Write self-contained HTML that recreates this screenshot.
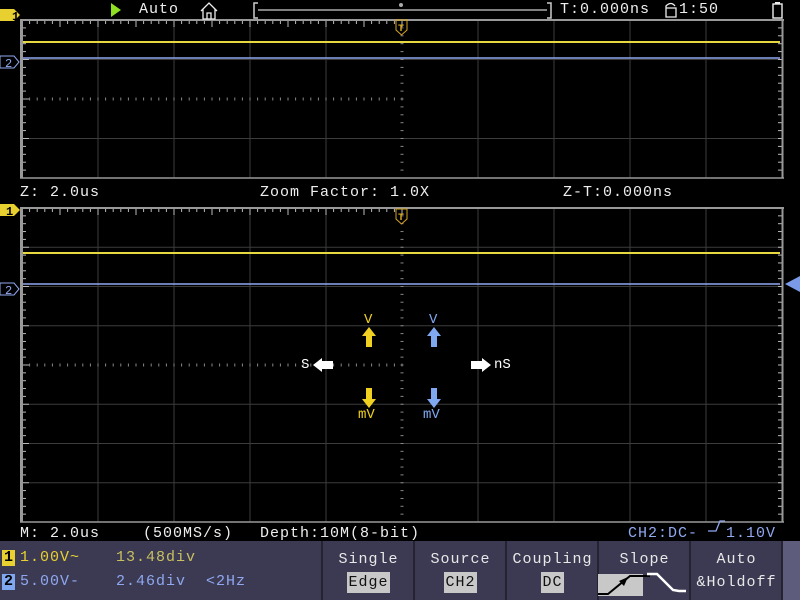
<!DOCTYPE html>
<html><head><meta charset="utf-8"><style>
body{margin:0;width:800px;height:600px;background:#000;overflow:hidden;position:relative;font-family:"Liberation Mono",monospace;}
.t{position:absolute;white-space:pre;font-size:15px;line-height:16px;letter-spacing:1px;}
svg{position:absolute;left:0;top:0}
.btn{position:absolute;top:542px;height:58px;text-align:center;color:#e8e8e8;font-size:15px;letter-spacing:1px;}
</style></head><body>
<svg id="s" width="800" height="600" viewBox="0 0 800 600">
<rect x="0" y="541" width="800" height="59" fill="#3b3a52"/>
<rect x="782" y="541" width="18" height="59" fill="#5d5c7c"/>
<g stroke="#24232f" stroke-width="2">
<line x1="322" y1="541" x2="322" y2="600"/><line x1="414" y1="541" x2="414" y2="600"/><line x1="506" y1="541" x2="506" y2="600"/><line x1="598" y1="541" x2="598" y2="600"/><line x1="690" y1="541" x2="690" y2="600"/><line x1="782" y1="541" x2="782" y2="600"/>
</g>
<g id="g"></g>
<line x1="23" y1="42" x2="780" y2="42" stroke="#e8d840" stroke-width="2"/>
<line x1="23" y1="58" x2="780" y2="58" stroke="#8fa8f0" stroke-width="1.5"/>
<line x1="23" y1="253" x2="780" y2="253" stroke="#e8d840" stroke-width="2"/>
<line x1="23" y1="284" x2="780" y2="284" stroke="#8fa8f0" stroke-width="1.5"/>
<polygon points="0,9 14,9 20,15 14,21 0,21" fill="#e8d030"/>
<text x="12" y="20" font-family="Liberation Mono" font-weight="bold" font-size="12" fill="#000">1</text>
<polygon points="0,204 14,204 20,210 14,216 0,216" fill="#e8d030"/>
<text x="6" y="215" font-family="Liberation Mono" font-weight="bold" font-size="12" fill="#000">1</text>
<polygon points="0,56 14,56 19,62 14,68 0,68" fill="none" stroke="#8fa8f0"/>
<text x="5" y="67" font-family="Liberation Mono" font-size="12" fill="#8fa8f0">2</text>
<polygon points="0,283 14,283 19,289 14,295 0,295" fill="none" stroke="#8fa8f0"/>
<text x="5" y="294" font-family="Liberation Mono" font-size="12" fill="#8fa8f0">2</text>
<polygon points="800,276 785,284 800,292" fill="#7a9ae8"/>
<path d="M396,20 h11 v10 l-5.5,5 l-5.5,-5z" fill="none" stroke="#d9a520"/>
<text x="398" y="31" font-family="Liberation Mono" font-weight="bold" font-size="10" fill="#d9a520">T</text>
<path d="M396,209 h11 v10 l-5.5,5 l-5.5,-5z" fill="none" stroke="#d9a520"/>
<text x="398" y="220" font-family="Liberation Mono" font-weight="bold" font-size="10" fill="#d9a520">T</text>
<polygon points="111,3 121,10 111,17" fill="#8ee020"/>
<path d="M201,11 L209,3 L217,11 M203,9.5 V19 H215 V9.5 M207,19 V13 H211 V19" fill="none" stroke="#eee" stroke-width="1.3"/>
<path d="M258,3 H254 V18 H258 M547,3 H551 V18 H547" fill="none" stroke="#ccc" stroke-width="1.5"/>
<line x1="258" y1="10" x2="547" y2="10" stroke="#aaa" stroke-width="1.5"/>
<circle cx="401" cy="5" r="2" fill="#aaa"/>
<path d="M666,17 V8 H676 V17 Z M666,8 V6 Q671,1 675,6" fill="none" stroke="#eee" stroke-width="1.3"/>
<rect x="773" y="4" width="9" height="14" fill="none" stroke="#eee" stroke-width="1.4"/><rect x="775" y="2" width="5" height="2" fill="#eee"/>
<g fill="#f0d020"><polygon points="369,327 362,336 366,336 366,347 372,347 372,336 376,336"/><polygon points="369,408 362,399 366,399 366,388 372,388 372,399 376,399"/></g>
<g fill="#80a8f0"><polygon points="434,327 427,336 431,336 431,347 437,347 437,336 441,336"/><polygon points="434,408 427,399 431,399 431,388 437,388 437,399 441,399"/></g>
<g fill="#fff"><polygon points="313,365 322,358 322,361 333,361 333,369 322,369 322,372"/><polygon points="491,365 482,358 482,361 471,361 471,369 482,369 482,372"/></g>
<rect x="598" y="574" width="45" height="22" fill="#c8c8c8"/>
<path d="M598,594 H608 L630,576 H650" fill="none" stroke="#000" stroke-width="2"/>
<polygon points="628,577 619,581 624,586" fill="#000"/>
<path d="M647,574 H657 L673,590 L679,591 H686" fill="none" stroke="#fff" stroke-width="2.5"/>
<path d="M708,531 H716 L720,521 H725" fill="none" stroke="#8fa8f0" stroke-width="1.3"/>
</svg>
<script>
var g=document.getElementById('g'),h='';
function L(x1,y1,x2,y2,c,w){h+='<line x1="'+x1+'" y1="'+y1+'" x2="'+x2+'" y2="'+y2+'" stroke="'+c+'" stroke-width="'+(w||1)+'"/>';}
function panel(t,b,nd){
 var dy=(b-t)/nd;
 for(var i=1;i<10;i++){var x=22+76*i;if(i!=5)L(x,t,x,b,'#3c3c3c');}
 for(var j=1;j<nd;j++){var y=t+dy*j;if(Math.abs(y-(t+b)/2)>1)L(22,y,782,y,'#3c3c3c');}
 var cy=(t+b)/2;
 for(var k=0;k<=50;k++){var x=22+7.6*k;L(x,t,x,t+(k%5?4:7),'#bbb');L(x,cy-1.5,x,cy+1.5,'#888');}
 for(var k=0;k<=nd*5;k++){var y=t+dy/5*k;L(22,y,(k%5?26:29),y,'#bbb');L(778,y,782,y,'#bbb');L(400.5,y,403.5,y,'#888');}
 L(21.5,t,21.5,b,'#999',3);L(20,t,784,t,'#999',2);L(782.5,t,782.5,b,'#999',2);L(20,b,784,b,'#999',1.5);
}
panel(20,178,4);panel(208,522,8);
g.innerHTML=h;
</script>
<div class="t" style="left:139px;top:2px;color:#eee">Auto</div>
<div class="t" style="left:560px;top:2px;color:#eee">T:0.000ns</div>
<div class="t" style="left:679px;top:2px;color:#eee">1:50</div>
<div class="t" style="left:20px;top:185px;color:#eee">Z: 2.0us</div>
<div class="t" style="left:260px;top:185px;color:#eee">Zoom Factor: 1.0X</div>
<div class="t" style="left:563px;top:185px;color:#eee">Z-T:0.000ns</div>
<div class="t" style="left:364px;top:312px;color:#f0d020;font-size:14px;letter-spacing:0">V</div>
<div class="t" style="left:429px;top:312px;color:#80a8f0;font-size:14px;letter-spacing:0">V</div>
<div class="t" style="left:358px;top:407px;color:#f0d020;font-size:14px;letter-spacing:0">mV</div>
<div class="t" style="left:423px;top:407px;color:#80a8f0;font-size:14px;letter-spacing:0">mV</div>
<div class="t" style="left:301px;top:357px;color:#fff;font-size:14px;letter-spacing:0">S</div>
<div class="t" style="left:494px;top:357px;color:#fff;font-size:14px;letter-spacing:0">nS</div>
<div class="t" style="left:20px;top:526px;color:#eee">M: 2.0us</div>
<div class="t" style="left:143px;top:526px;color:#eee">(500MS/s)</div>
<div class="t" style="left:260px;top:526px;color:#eee">Depth:10M(8-bit)</div>
<div class="t" style="left:628px;top:526px;color:#8fa8f0">CH2:DC-</div>
<div class="t" style="left:726px;top:526px;color:#8fa8f0">1.10V</div>
<div class="t" style="left:2px;top:550px;background:#e8d030;color:#000;font-weight:bold;width:13px;text-align:center;letter-spacing:0">1</div>
<div class="t" style="left:20px;top:550px;color:#e8d030">1.00V~</div>
<div class="t" style="left:116px;top:550px;color:#c8c060">13.48div</div>
<div class="t" style="left:2px;top:574px;background:#80a8f0;color:#000;font-weight:bold;width:13px;text-align:center;letter-spacing:0">2</div>
<div class="t" style="left:20px;top:574px;color:#8fa8f0">5.00V-</div>
<div class="t" style="left:116px;top:574px;color:#8fa8f0">2.46div  &lt;2Hz</div>
<div class="btn" style="left:323px;width:91px"><div style="margin-top:9px">Single</div><span style="display:inline-block;margin-top:4px;background:#c8c8c8;color:#111;padding:2px 1px">Edge</span></div>
<div class="btn" style="left:415px;width:91px"><div style="margin-top:9px">Source</div><span style="display:inline-block;margin-top:4px;background:#c8c8c8;color:#111;padding:2px 1px">CH2</span></div>
<div class="btn" style="left:507px;width:91px"><div style="margin-top:9px">Coupling</div><span style="display:inline-block;margin-top:4px;background:#c8c8c8;color:#111;padding:2px 1px">DC</span></div>
<div class="btn" style="left:599px;width:91px"><div style="margin-top:9px">Slope</div></div>
<div class="btn" style="left:691px;width:91px"><div style="margin-top:9px">Auto</div><div style="margin-top:6px">&amp;Holdoff</div></div>
</body></html>
